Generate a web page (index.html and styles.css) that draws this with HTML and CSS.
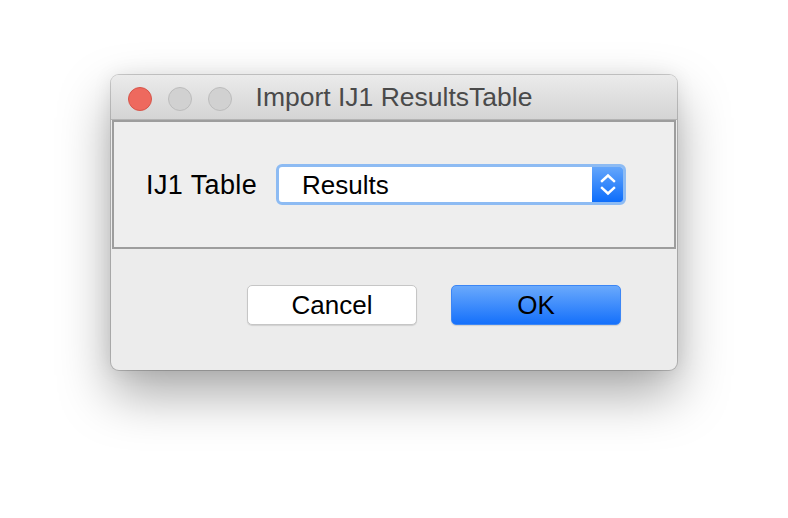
FILE: index.html
```html
<!DOCTYPE html>
<html>
<head>
<meta charset="utf-8">
<link rel="stylesheet" href="styles.css">
</head>
<body>
<div class="window">
  <div class="titlebar">
    <div class="lights">
      <span class="light red"></span>
      <span class="light gray"></span>
      <span class="light gray"></span>
    </div>
    <div class="title">Import IJ1 ResultsTable</div>
  </div>
  <div class="panel">
    <div class="label">IJ1 Table</div>
    <div class="select">
      <div class="select-value">Results</div>
      <div class="stepper">
        <svg width="18" height="26" viewBox="0 0 18 26">
          <path d="M3 9 L9 3.5 L15 9" fill="none" stroke="#fff" stroke-width="2.4" stroke-linecap="square"/>
          <path d="M3 16 L9 21.5 L15 16" fill="none" stroke="#fff" stroke-width="2.4" stroke-linecap="square"/>
        </svg>
      </div>
    </div>
  </div>
  <div class="actions">
    <button class="btn cancel">Cancel</button>
    <button class="btn ok">OK</button>
  </div>
</div>
</body>
</html>
```
FILE: styles.css
```css
html, body {
  margin: 0;
  padding: 0;
  background: #ffffff;
}
body {
  padding: 75px 0 0 111px;
  min-height: 518px;
  box-sizing: border-box;
  font-family: "Liberation Sans", Arial, sans-serif;
}
.window {
  width: 566px;
  height: 295px;
  background: #ececec;
  border-radius: 8px;
  overflow: hidden;
  box-shadow: 0 0 0 1px rgba(0,0,0,0.18), 0 24px 52px rgba(0,0,0,0.34), 0 0 20px rgba(0,0,0,0.08);
  display: flex;
  flex-direction: column;
}
.titlebar {
  height: 44px;
  flex: none;
  position: relative;
  display: flex;
  align-items: center;
  justify-content: center;
  background: linear-gradient(#ebebeb, #d4d4d4);
  border-bottom: 1px solid #b3b3b3;
}
.lights {
  position: absolute;
  left: 17px;
  top: 12px;
  display: flex;
  gap: 16px;
}
.light {
  width: 24px;
  height: 24px;
  border-radius: 50%;
  box-sizing: border-box;
  display: block;
}
.light.red {
  background: #ee695e;
  border: 1px solid #d6554a;
}
.light.gray {
  background: #d1d1d1;
  border: 1px solid #bcbcbc;
}
.title {
  font-size: 26.5px;
  color: #4a4a4a;
  line-height: 44px;
}
.panel {
  height: 125px;
  flex: none;
  margin: 0 1px 0 1px;
  border: 2px solid #9d9d9d;
  background: #eeeeee;
  display: flex;
  align-items: center;
  padding-left: 32px;
}
.label {
  font-size: 27px;
  letter-spacing: 0.4px;
  color: #000;
  width: 130px;
  flex: none;
  padding-top: 2px;
}
.select {
  width: 350px;
  height: 41px;
  flex: none;
  box-sizing: border-box;
  border: 3px solid #8dbbf3;
  border-radius: 6px;
  background: #fff;
  display: flex;
  overflow: hidden;
}
.select-value {
  flex: 1;
  font-size: 26px;
  color: #000;
  padding-left: 23px;
  line-height: 36px;
}
.stepper {
  width: 31px;
  flex: none;
  background: linear-gradient(#64a6fb, #0d6dfb);
  display: flex;
  align-items: center;
  justify-content: center;
}
.actions {
  flex: 1;
  display: flex;
  align-items: flex-start;
  padding: 36px 0 0 136px;
  gap: 34px;
}
.btn {
  width: 170px;
  height: 40px;
  border-radius: 5px;
  font-family: "Liberation Sans", Arial, sans-serif;
  font-size: 26px;
  color: #000;
  padding: 0;
  box-sizing: border-box;
  line-height: 36px;
}
.cancel {
  background: #ffffff;
  border: 1px solid #c6c6c6;
  box-shadow: 0 1px 1px rgba(0,0,0,0.12);
}
.ok {
  background: linear-gradient(#6aa9fc, #1570fb);
  border: 1px solid #3c86f5;
  box-shadow: 0 1px 1px rgba(0,0,0,0.12);
}
```
